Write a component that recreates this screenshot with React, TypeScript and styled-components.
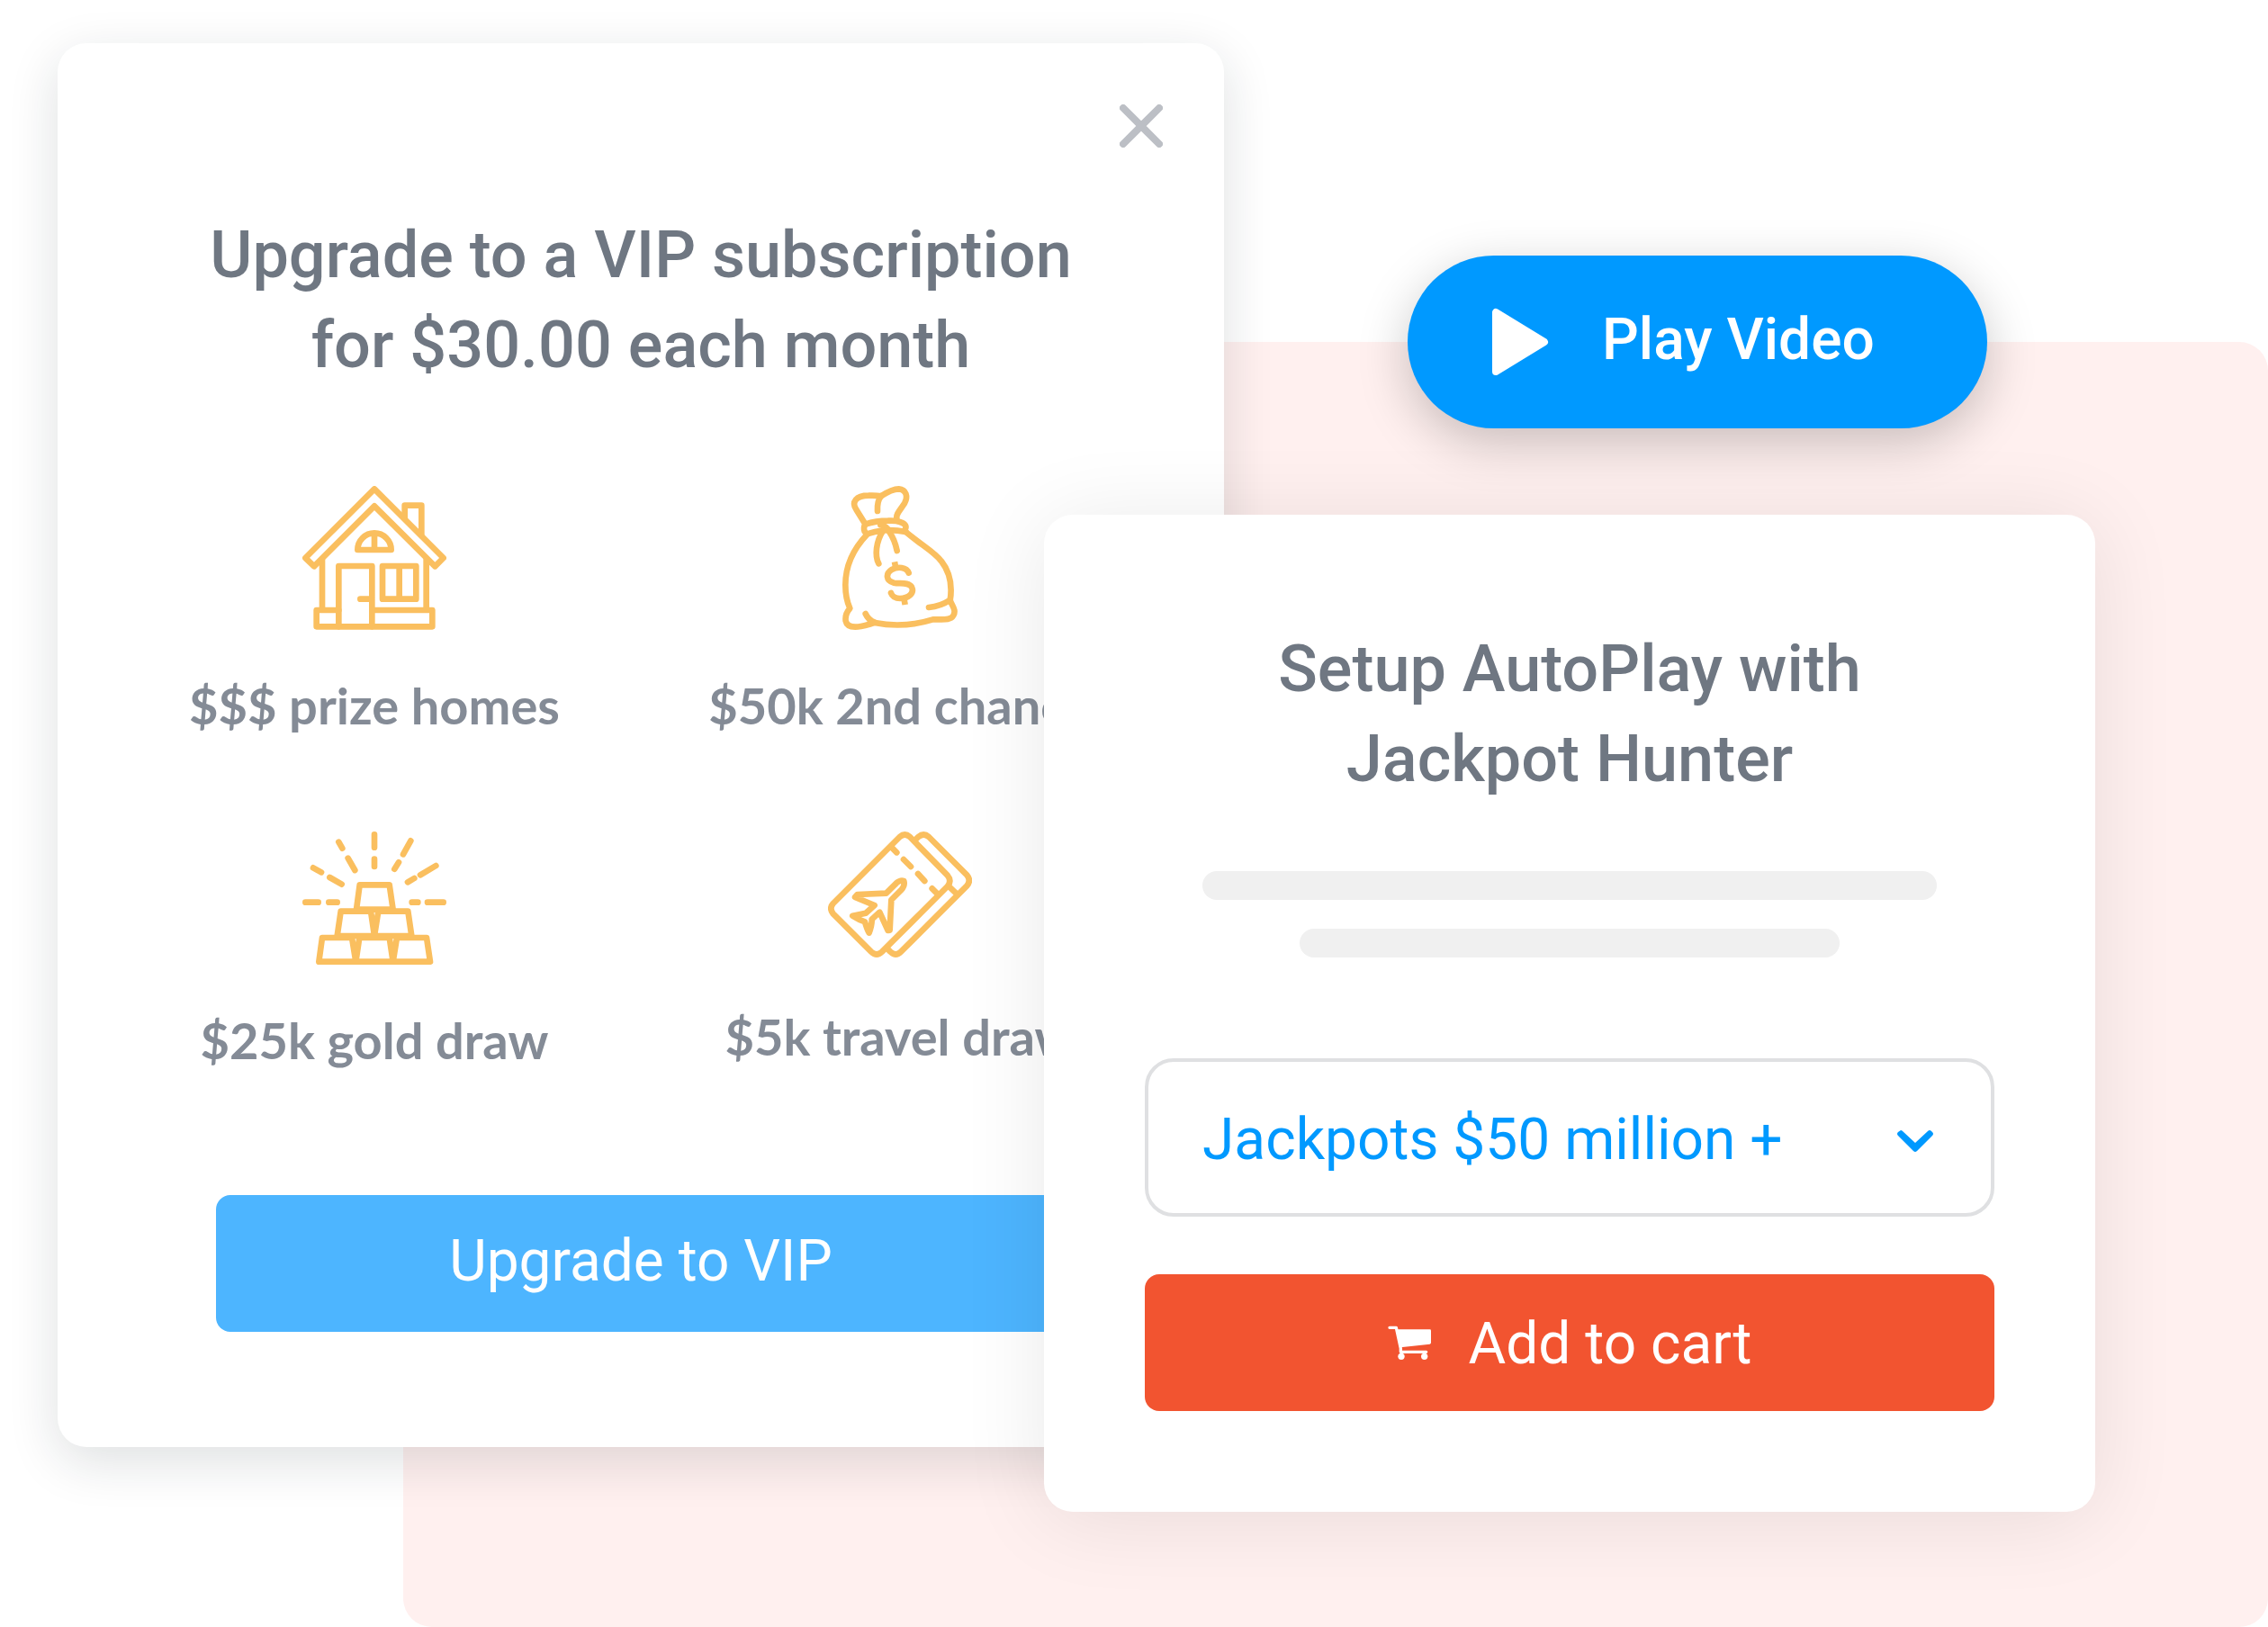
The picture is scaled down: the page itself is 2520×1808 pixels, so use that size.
import React from "react";
import styled, { createGlobalStyle } from "styled-components";

const color = {
  heading: "#6f7782",
  label: "#848b96",
  blue: "#0099ff",
  lightBlue: "#4db5ff",
  red: "#f25430",
  gold: "#fabf5f",
  blush: "#fff0ef",
  border: "#dfe0e2",
  bar: "#f0f0f0",
  close: "#bcbfc5",
};

const GlobalStyle = createGlobalStyle`
  *, *::before, *::after { box-sizing: border-box; }
  body {
    margin: 0;
    background: #fff;
    font-family: Roboto, "Liberation Sans", sans-serif;
  }
  button, select { font: inherit; cursor: pointer; }
`;

const Stage = styled.main`
  display: grid;
  grid-template-columns: 64fr 384fr 712fr 200fr 204fr 644fr 120fr 192fr;
  grid-template-rows: 48px 236px 96px 96px 96px auto 72px 128px;
  overflow: hidden;
`;

const Backdrop = styled.div`
  grid-column: 3 / -1;
  grid-row: 4 / -1;
  border-radius: 32px;
  background: ${color.blush};
`;

const Card = styled.section`
  display: flex;
  flex-direction: column;
  border-radius: 32px;
  background: #fff;
`;

const VipCard = styled(Card)`
  grid-column: 2 / 5;
  grid-row: 2 / 7;
  padding: 60px 60px 128px;
  box-shadow: 0 16px 56px rgba(20, 35, 45, 0.14);
`;

const AutoPlayCard = styled(Card)`
  grid-column: 4 / 8;
  grid-row: 6 / 8;
  padding: 122px 112px 112px;
  box-shadow: 0 8px 96px rgba(0, 0, 0, 0.09);
`;

const CloseButton = styled.button`
  align-self: flex-end;
  display: grid;
  place-items: center;
  width: 64px;
  height: 64px;
  padding: 0;
  border: 0;
  background: none;
  color: ${color.close};
`;

const Title = styled.h2<{ $top?: number }>`
  margin: ${(p) => p.$top ?? 0}px 0 0;
  color: ${color.heading};
  font-size: 72px;
  font-weight: 500;
  line-height: 100px;
  text-align: center;
`;

const Features = styled.ul`
  display: grid;
  grid-template-columns: 1fr 1fr;
  row-gap: 100px;
  margin: 106px 8px 0 0;
  padding: 0;
  list-style: none;
`;

const Feature = styled.li`
  display: flex;
  flex-direction: column;
  align-items: center;
  gap: 44px;
  color: ${color.label};
  font-family: Lato, "Liberation Sans", sans-serif;
  font-size: 56px;
  font-weight: 700;
  line-height: 80px;
  white-space: nowrap;
`;

const LineIcon = styled.svg`
  display: block;
  fill: none;
  stroke: ${color.gold};
  stroke-width: 20;
  stroke-linecap: round;
  stroke-linejoin: round;
`;

const BlockButton = styled.button<{ $fill: string }>`
  display: flex;
  align-items: center;
  justify-content: center;
  gap: 42px;
  padding: 36px 32px 40px;
  border: 0;
  border-radius: 16px;
  background: ${(p) => p.$fill};
  color: #fff;
  font-size: 64px;
  line-height: 76px;
`;

const UpgradeButton = styled(BlockButton)`
  margin: 132px 116px 0;
`;

const CartButton = styled(BlockButton)`
  align-items: flex-start;
  padding: 40px 32px 36px;

  > svg {
    margin-top: 17px;
  }
`;

const PlayButton = styled.button`
  grid-column: 6;
  grid-row: 3 / 5;
  display: flex;
  align-items: center;
  gap: 58px;
  padding: 0 92px;
  border: 0;
  border-radius: 96px;
  background: ${color.blue};
  color: #fff;
  font-size: 64px;
  font-weight: 500;
  line-height: 76px;
  white-space: nowrap;
  box-shadow: 0 16px 56px rgba(0, 0, 0, 0.22);
`;

const PlayLabel = styled.span`
  padding-bottom: 4px;
`;

const Placeholder = styled.div`
  display: flex;
  flex-direction: column;
  align-items: center;
  gap: 32px;
  margin: 74px 0 112px;
`;

const Bar = styled.span<{ $width: number }>`
  width: ${(p) => p.$width}px;
  max-width: 100%;
  height: 32px;
  border-radius: 16px;
  background: ${color.bar};
`;

const SelectWrap = styled.div`
  display: grid;
  align-items: center;
  margin-bottom: 64px;

  > * {
    grid-area: 1 / 1;
  }

  > svg {
    justify-self: end;
    margin: 8px 68px 0 0;
    pointer-events: none;
  }
`;

const Select = styled.select`
  appearance: none;
  width: 100%;
  height: 176px;
  padding: 4px 140px 0 60px;
  border: 4px solid ${color.border};
  border-radius: 32px;
  background: #fff;
  color: ${color.blue};
  font-size: 64px;
`;

function HouseIcon() {
  return (
    <LineIcon width="160" height="160" viewBox="48 30 480 480" aria-hidden="true">
      <path d="M288 40 58 270 87 298 288 97 490 298 518 270Z" />
      <path d="M389 138V95H445V192" />
      <path d="M114 276V440M461 276V440" />
      <path d="M169 444H95V499H481V444H280" />
      <path d="M169 499V297H280V499M241 407H280" />
      <path d="M315 297H427V407H315ZM371 297V407" />
      <path d="M232 243A56 56 0 0 1 344 243ZM288 187V243" />
    </LineIcon>
  );
}

function MoneyBagIcon() {
  return (
    <LineIcon width="128" height="160" viewBox="78 30 384 480" aria-hidden="true">
      <path d="M154 157 125 110C106 84 124 62 165 62Q190 61 207 64C228 50 250 40 266 40C290 42 298 64 285 88L265 117Q257 128 259 142" />
      <path d="M207 64Q193 80 195 114" />
      <path d="M154 158Q190 146 230 146C262 144 268 150 275 152C290 158 292 166 287 175" />
      <path d="M154 158Q147 170 152 182L160 190Q185 182 215 178Q255 176 289 183" />
      <path d="M205 160Q228 164 235 184C249 204 256 226 260 246" />
      <path d="M213 180C190 216 185 262 199 289" />
      <path d="M160 192C105 250 88 305 88 360C88 390 95 420 103 438C91 452 87 466 89 480C93 500 115 502 140 498C160 495 170 490 186 486C250 499 315 495 380 475C410 474 438 480 448 462C458 444 445 432 437 412C444 368 440 322 408 281C385 250 345 230 289 183" />
      <path d="M155 456Q165 478 186 485M366 435Q405 431 437 410" />
      <path d="M299 320C292 300 262 298 242 309C222 322 222 346 250 353C270 357 298 349 309 367C319 388 298 405 270 405C254 405 243 396 240 387" />
      <path strokeLinecap="butt" d="M252 283 256 305M283 404 287 426" />
    </LineIcon>
  );
}

function GoldBarsIcon() {
  return (
    <LineIcon width="160" height="148" viewBox="48 42 480 444" aria-hidden="true">
      <path d="M288 52V95M288 134V159M169 77 181 98M200 131 223 171M84 163 111 178M139 195 179 218M58 278H101M136 278H164" />
      <path d="M413 278H433M465 278H518M399 211 421 198M441 187 493 156M355 167 369 145M384 118 409 73" />
      <path d="M239 220H338L350 302H228Z" />
      <path d="M176 308H276L288 390H164ZM301 308H400L412 390H288Z" />
      <path d="M114 396H213L226 476H103ZM238 396H338L350 476H226ZM363 396H462L474 476H350Z" />
    </LineIcon>
  );
}

function TicketsIcon() {
  return (
    <LineIcon width="160" height="144" viewBox="60 42 480 432" aria-hidden="true">
      <path d="M77 282 299 60Q316 45 333 60L458 188Q474 207 458 225L240 443Q222 460 204 443L77 316Q63 298 77 282Z" />
      <path d="M350 71 361 60Q379 45 396 60L523 187Q538 205 523 223L303 443Q286 460 268 443L258 433" />
      <path d="M464 226 487 248M272 95 289 112M312 135 336 159M360 183 382 207M407 232 425 250" />
      <path d="M254 248 288 214Q302 202 313 207Q317 222 305 236L271 270 266 371 260 372 232 311 206 335Q207 352 197 380Q190 368 183 343Q162 336 142 323L186 314 215 288 150 261 158 252Z" />
    </LineIcon>
  );
}

function CartIcon() {
  return (
    <svg width="48" height="38" viewBox="126 218 144 114" aria-hidden="true">
      <path
        d="M132 225H154L169 294V306H254"
        fill="none"
        stroke="#fff"
        strokeWidth="10"
        strokeLinecap="round"
        strokeLinejoin="round"
      />
      <path d="M154 231H266Q270 231 270 235V275Q270 279 266 280L175 290H165Z" fill="#fff" />
      <circle cx="171" cy="321" r="11" fill="#fff" />
      <circle cx="248" cy="321" r="11" fill="#fff" />
    </svg>
  );
}

const features = [
  { label: "$$$ prize homes", Icon: HouseIcon },
  { label: "$50k 2nd chance", Icon: MoneyBagIcon },
  { label: "$25k gold draw", Icon: GoldBarsIcon },
  { label: "$5k travel draw", Icon: TicketsIcon },
];

export default function App() {
  return (
    <>
      <GlobalStyle />
      <Stage>
        <Backdrop />

        <VipCard>
          <CloseButton type="button" aria-label="Close">
            <svg width="48" height="48" viewBox="0 0 48 48" aria-hidden="true">
              <path d="M4 4 44 44M44 4 4 44" stroke="currentColor" strokeWidth="8" strokeLinecap="round" />
            </svg>
          </CloseButton>
          <Title $top={62}>
            Upgrade to a VIP subscription
            <br />
            for $30.00 each month
          </Title>
          <Features>
            {features.map(({ label, Icon }) => (
              <Feature key={label}>
                <Icon />
                {label}
              </Feature>
            ))}
          </Features>
          <UpgradeButton type="button" $fill={color.lightBlue}>
            Upgrade to VIP
          </UpgradeButton>
        </VipCard>

        <PlayButton type="button">
          <svg width="66" height="76" viewBox="0 0 66 76" aria-hidden="true">
            <path
              d="M6 5V71L60 38Z"
              fill="#fff"
              stroke="#fff"
              strokeWidth="8"
              strokeLinejoin="round"
            />
          </svg>
          <PlayLabel>Play Video</PlayLabel>
        </PlayButton>

        <AutoPlayCard>
          <Title>
            Setup AutoPlay with
            <br />
            Jackpot Hunter
          </Title>
          <Placeholder aria-hidden="true">
            <Bar $width={816} />
            <Bar $width={600} />
          </Placeholder>
          <SelectWrap>
            <Select aria-label="Jackpot size" defaultValue="50">
              <option value="50">Jackpots $50 million +</option>
            </Select>
            <svg width="40" height="24" viewBox="0 0 40 24" aria-hidden="true">
              <path
                d="M4 0Q5 0 6 1L20 14 34 1Q36 -1 38 1L39 2Q41 4 39 6L22 23Q20 25 18 23L1 6Q-1 4 1 2Z"
                fill={color.blue}
              />
            </svg>
          </SelectWrap>
          <CartButton type="button" $fill={color.red}>
            <CartIcon />
            Add to cart
          </CartButton>
        </AutoPlayCard>
      </Stage>
    </>
  );
}
